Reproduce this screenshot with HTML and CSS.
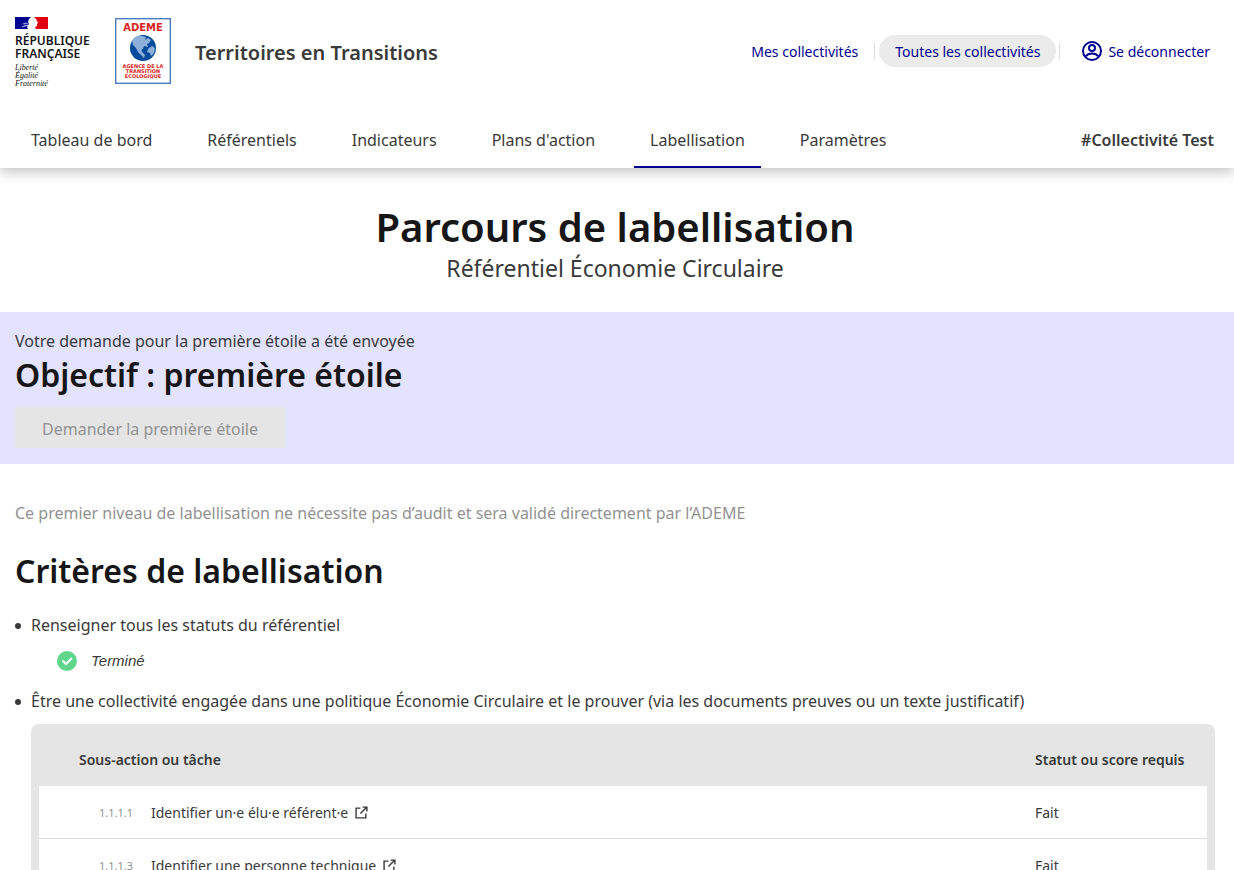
FILE: index.html
```html
<!DOCTYPE html>
<html lang="fr">
<head>
<meta charset="utf-8">
<meta name="viewport" content="width=device-width, initial-scale=1">
<title>Territoires en Transitions</title>
<link rel="stylesheet" href="styles.css">
</head>
<body>
<header class="header">
  <div class="header-top">
    <div class="republic">
      <svg class="flag" viewBox="0 0 33 12" aria-hidden="true">
        <path fill="#fff" d="M0 0h33v12H0z"/>
        <path fill="#000091" d="M0 0h16L14 2 13 5 14 7 12 10 13 12H0z"/>
        <path fill="#e1000f" d="M19 0h14v12H21l-1-2 2-1 0-2 1-1-1-2-1-2z"/>
        <path fill="none" stroke="#b4b4e8" stroke-width="1" d="M8 7l3-1 2 1M7 10l3-1 3-1M9 8l4 1"/>
      </svg>
      <div class="republic-name">RÉPUBLIQUE<br>FRANÇAISE</div>
      <div class="motto">Liberté<br>Égalité<br>Fraternité</div>
    </div>
    <svg class="ademe" viewBox="0 0 56 66" role="img" aria-label="ADEME">
      <rect x=".7" y=".7" width="54.6" height="64.6" fill="#fff" stroke="#4b7dbb" stroke-width="1.4"/>
      <text class="ademe-name" x="28" y="13" text-anchor="middle">ADEME</text>
      <circle cx="28" cy="30" r="13" fill="#054a9b"/>
      <path fill="#8db0db" d="M17 23C20 19 24 17 27 18L31 19 30 22 33 20 36 22 34 25 32 26 33 29 29 28 28 31 26 32 28 35 30 37 29 40 26 37 23 34 21 30 18 27zM33 31l4-3 3 2-1 5-3 3-1-3-3-1z"/>
      <text class="ademe-sub" x="28" y="50" text-anchor="middle">AGENCE DE LA</text>
      <text class="ademe-sub" x="28" y="55" text-anchor="middle">TRANSITION</text>
      <text class="ademe-sub" x="28" y="60" text-anchor="middle">ÉCOLOGIQUE</text>
    </svg>
    <div class="site-name">Territoires en Transitions</div>
    <nav class="tools" aria-label="Accès rapide">
      <a class="tool" href="#">Mes collectivités</a>
      <span class="divider"></span>
      <a class="tool tool-active" href="#">Toutes les collectivités</a>
      <span class="divider"></span>
      <a class="tool tool-user" href="#">
        <svg class="user-icon" viewBox="0 0 20 20" aria-hidden="true"><g fill="none" stroke="currentColor" stroke-width="2"><circle cx="10" cy="10" r="9"/><circle cx="10" cy="7" r="3"/><path d="M3.5 15.5C6.5 11.5 13.500 11.5 16.500 15.500"/></g></svg>
        Se déconnecter
      </a>
    </nav>
  </div>
  <nav class="menu" aria-label="Menu principal">
    <a class="menu-item" href="#">Tableau de bord</a>
    <a class="menu-item" href="#">Référentiels</a>
    <a class="menu-item" href="#">Indicateurs</a>
    <a class="menu-item" href="#">Plans d'action</a>
    <a class="menu-item menu-active" href="#" aria-current="page">Labellisation</a>
    <a class="menu-item" href="#">Paramètres</a>
    <div class="collectivity">#Collectivité Test</div>
  </nav>
</header>
<main>
  <div class="title">
    <h1>Parcours de labellisation</h1>
    <p class="subtitle">Référentiel Économie Circulaire</p>
  </div>
  <section class="goal">
    <p>Votre demande pour la première étoile a été envoyée</p>
    <h2>Objectif : première étoile</h2>
    <button class="request" type="button" disabled>Demander la première étoile</button>
  </section>
  <section class="criteria">
    <p class="note">Ce premier niveau de labellisation ne nécessite pas d’audit et sera validé directement par l’ADEME</p>
    <h2>Critères de labellisation</h2>
    <ul class="criteria-list">
      <li>Renseigner tous les statuts du référentiel
        <div class="done">
          <svg class="check" viewBox="0 0 20 20" aria-hidden="true"><circle cx="10" cy="10" r="10" fill="#5fd68b"/><path d="M5.500 9.500L9 13l6-6" fill="none" stroke="#fff" stroke-width="2"/></svg>
          <em>Terminé</em>
        </div>
      </li>
      <li>Être une collectivité engagée dans une politique Économie Circulaire et le prouver (via les documents preuves ou un texte justificatif)
        <div class="table-frame">
          <table class="actions">
            <thead><tr><th scope="col" colspan="2">Sous-action ou tâche</th><th class="status" scope="col">Statut ou score requis</th></tr></thead>
            <tbody>
              <tr><td class="code">1.1.1.1</td><td><a href="#">Identifier un·e élu·e référent·e <svg class="external" viewBox="0 0 12 12" aria-hidden="true"><path d="M5 2H1v9h9V7M7 1h4v4M11 1L5 7" fill="none" stroke="currentColor" stroke-width="1.300"/></svg></a></td><td class="status">Fait</td></tr>
              <tr><td class="code">1.1.1.3</td><td><a href="#">Identifier une personne technique <svg class="external" viewBox="0 0 12 12" aria-hidden="true"><path d="M5 2H1v9h9V7M7 1h4v4M11 1L5 7" fill="none" stroke="currentColor" stroke-width="1.300"/></svg></a></td><td class="status">Fait</td></tr>
            </tbody>
          </table>
        </div>
      </li>
    </ul>
  </section>
</main>
</body>
</html>
```
FILE: styles.css
```css
* { box-sizing: border-box; }
body {
  margin: 0;
  color: #3a3a3a;
  background: #fff;
  font-family: "Noto Sans", "Open Sans", sans-serif;
  font-size: 16px;
  line-height: 24px;
}
h1, h2, p, ul { margin: 0; }
a { color: inherit; text-decoration: none; }
svg { display: block; }
.header { box-shadow: 0 4px 12px rgba(0, 0, 0, .24); }
.header-top { display: flex; align-items: flex-start; padding: 16px 24px 0 15px; height: 112px; }
.republic { width: 100px; }
.flag { width: 33px; height: 14px; }
.republic-name { margin-top: 4px; color: #161616; font-size: 12px; font-weight: 600; line-height: 13px; }
.motto { margin-top: 4px; color: #161616; font-family: "Liberation Serif", serif; font-size: 8px; font-style: italic; line-height: 8px; }
.ademe { width: 56px; height: 66px; margin-top: 2px; }
.ademe-name { fill: #d9251d; font: bold 10px "DejaVu Sans", sans-serif; }
.ademe-sub { fill: #d9251d; font: bold 5px "DejaVu Sans", sans-serif; }
.site-name { margin: 23px 0 0 24px; font-size: 20px; font-weight: 600; line-height: 28px; }
.tools { display: flex; align-items: center; margin: 19px 0 0 auto; color: #000091; font-size: 14px; white-space: nowrap; }
.tool { padding: 5px 16px 3px; }
.tool-active { margin: 0 3px 0 4px; border-radius: 16px; background: #ebebeb; }
.divider { width: 1px; height: 16px; background: #ddd; }
.tool-user { display: flex; align-items: center; gap: 6px; padding: 5px 0 3px 22px; }
.user-icon { width: 20px; height: 20px; margin-bottom: 2px; }
.menu { display: flex; align-items: stretch; gap: 23px; height: 56px; padding: 0 20px 0 15px; }
.menu-item { padding: 16px 16px 14px; border-bottom: 2px solid transparent; }
.menu-active { border-color: #000091; }
.collectivity { margin-left: auto; padding-top: 16px; font-weight: 600; }
.title { padding: 32px 16px 29px 12px; text-align: center; }
h1 { color: #161616; font-size: 40px; font-weight: 600; line-height: 54px; }
.subtitle { font-size: 23px; line-height: 29px; }
h2 { color: #161616; font-size: 32px; font-weight: 600; line-height: 40px; }
.goal { padding: 17px 15px 16px; background: #e3e3fd; }
.goal h2 { margin: 2px 0 12px; }
.request { display: block; padding: 10px 27px 7px; border: 0; background: #e5e5e5; color: #929292; font: inherit; }
.criteria { padding: 37px 19px 24px 15px; }
.note { color: #929292; }
.criteria h2 { margin: 26px 0 22px; }
.criteria-list { padding-left: 16px; list-style: none; }
.criteria-list li::before {
  content: "";
  display: inline-block;
  width: 6px;
  height: 6px;
  margin: 0 10px 2px -16px;
  border-radius: 50%;
  background: #3a3a3a;
}
.criteria-list li + li { margin-top: 16px; }
.done { display: flex; align-items: center; gap: 14px; padding: 12px 0 0 26px; color: #161616; }
.done em { color: #3a3a3a; font-family: "Liberation Sans", sans-serif; font-size: 15px; }
.check { width: 20px; height: 20px; }
.table-frame { margin-top: 11px; padding: 0 8px 8px; border-radius: 8px; background: #e5e5e5; }
.actions { width: 100%; border-collapse: collapse; font-size: 14px; }
.actions th { padding: 24px 0 14px 40px; font-weight: 600; text-align: left; }
.actions tbody tr { background: #fff; border-bottom: 1px solid #ddd; }
.actions td { padding: 15px 0 13px; }
.actions .code { width: 112px; padding-right: 18px; color: #929292; font-size: 11px; text-align: right; }
.actions .status { width: 172px; padding-left: 0; }
.external { display: inline-block; width: 13px; height: 13px; margin-left: 3px; vertical-align: -1px; }
```
